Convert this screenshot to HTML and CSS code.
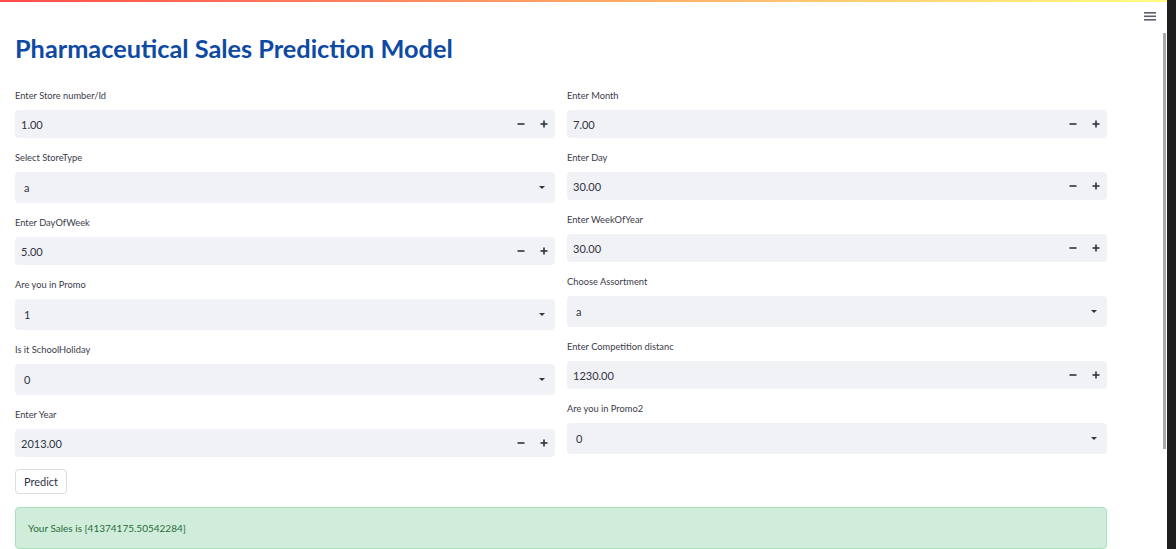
FILE: index.html
```html
<!DOCTYPE html>
<html>
<head>
<meta charset="utf-8">
<link rel="stylesheet" href="styles.css">
</head>
<body>
<div class="app">
  <div class="topline"></div>
  <button class="menu" aria-label="menu">
    <svg width="12" height="9" viewBox="0 0 12 9"><rect x="0" y="0" width="12" height="1.6" fill="#5c5f6a"/><rect x="0" y="3.5" width="12" height="1.6" fill="#5c5f6a"/><rect x="0" y="7" width="12" height="1.6" fill="#5c5f6a"/></svg>
  </button>
  <main class="main">
    <h1 class="title">Pharmaceutical Sales Prediction Model</h1>
    <div class="cols">
      <div class="col">
        <div class="widget">
          <label class="lbl">Enter Store number/Id</label>
          <div class="num"><span class="val">1.00</span><span class="step"><svg width="8" height="8" viewBox="0 0 8 8"><rect x="0.5" y="3.2" width="7" height="1.6" fill="#31333f"/></svg></span><span class="step"><svg width="8" height="8" viewBox="0 0 8 8"><rect x="0.5" y="3.2" width="7" height="1.6" fill="#31333f"/><rect x="3.2" y="0.5" width="1.6" height="7" fill="#31333f"/></svg></span></div>
        </div>
        <div class="widget">
          <label class="lbl">Select StoreType</label>
          <div class="sel"><span class="val">a</span><svg class="caret" width="6" height="3" viewBox="0 0 6 3"><path d="M0 0h6L3 3z" fill="#31333f"/></svg></div>
        </div>
        <div class="widget">
          <label class="lbl">Enter DayOfWeek</label>
          <div class="num"><span class="val">5.00</span><span class="step"><svg width="8" height="8" viewBox="0 0 8 8"><rect x="0.5" y="3.2" width="7" height="1.6" fill="#31333f"/></svg></span><span class="step"><svg width="8" height="8" viewBox="0 0 8 8"><rect x="0.5" y="3.2" width="7" height="1.6" fill="#31333f"/><rect x="3.2" y="0.5" width="1.6" height="7" fill="#31333f"/></svg></span></div>
        </div>
        <div class="widget">
          <label class="lbl">Are you in Promo</label>
          <div class="sel"><span class="val">1</span><svg class="caret" width="6" height="3" viewBox="0 0 6 3"><path d="M0 0h6L3 3z" fill="#31333f"/></svg></div>
        </div>
        <div class="widget">
          <label class="lbl">Is it SchoolHoliday</label>
          <div class="sel"><span class="val">0</span><svg class="caret" width="6" height="3" viewBox="0 0 6 3"><path d="M0 0h6L3 3z" fill="#31333f"/></svg></div>
        </div>
        <div class="widget">
          <label class="lbl">Enter Year</label>
          <div class="num"><span class="val">2013.00</span><span class="step"><svg width="8" height="8" viewBox="0 0 8 8"><rect x="0.5" y="3.2" width="7" height="1.6" fill="#31333f"/></svg></span><span class="step"><svg width="8" height="8" viewBox="0 0 8 8"><rect x="0.5" y="3.2" width="7" height="1.6" fill="#31333f"/><rect x="3.2" y="0.5" width="1.6" height="7" fill="#31333f"/></svg></span></div>
        </div>
      </div>
      <div class="col">
        <div class="widget">
          <label class="lbl">Enter Month</label>
          <div class="num"><span class="val">7.00</span><span class="step"><svg width="8" height="8" viewBox="0 0 8 8"><rect x="0.5" y="3.2" width="7" height="1.6" fill="#31333f"/></svg></span><span class="step"><svg width="8" height="8" viewBox="0 0 8 8"><rect x="0.5" y="3.2" width="7" height="1.6" fill="#31333f"/><rect x="3.2" y="0.5" width="1.6" height="7" fill="#31333f"/></svg></span></div>
        </div>
        <div class="widget">
          <label class="lbl">Enter Day</label>
          <div class="num"><span class="val">30.00</span><span class="step"><svg width="8" height="8" viewBox="0 0 8 8"><rect x="0.5" y="3.2" width="7" height="1.6" fill="#31333f"/></svg></span><span class="step"><svg width="8" height="8" viewBox="0 0 8 8"><rect x="0.5" y="3.2" width="7" height="1.6" fill="#31333f"/><rect x="3.2" y="0.5" width="1.6" height="7" fill="#31333f"/></svg></span></div>
        </div>
        <div class="widget">
          <label class="lbl">Enter WeekOfYear</label>
          <div class="num"><span class="val">30.00</span><span class="step"><svg width="8" height="8" viewBox="0 0 8 8"><rect x="0.5" y="3.2" width="7" height="1.6" fill="#31333f"/></svg></span><span class="step"><svg width="8" height="8" viewBox="0 0 8 8"><rect x="0.5" y="3.2" width="7" height="1.6" fill="#31333f"/><rect x="3.2" y="0.5" width="1.6" height="7" fill="#31333f"/></svg></span></div>
        </div>
        <div class="widget">
          <label class="lbl">Choose Assortment</label>
          <div class="sel"><span class="val">a</span><svg class="caret" width="6" height="3" viewBox="0 0 6 3"><path d="M0 0h6L3 3z" fill="#31333f"/></svg></div>
        </div>
        <div class="widget">
          <label class="lbl">Enter Competition distanc</label>
          <div class="num"><span class="val">1230.00</span><span class="step"><svg width="8" height="8" viewBox="0 0 8 8"><rect x="0.5" y="3.2" width="7" height="1.6" fill="#31333f"/></svg></span><span class="step"><svg width="8" height="8" viewBox="0 0 8 8"><rect x="0.5" y="3.2" width="7" height="1.6" fill="#31333f"/><rect x="3.2" y="0.5" width="1.6" height="7" fill="#31333f"/></svg></span></div>
        </div>
        <div class="widget">
          <label class="lbl">Are you in Promo2</label>
          <div class="sel"><span class="val">0</span><svg class="caret" width="6" height="3" viewBox="0 0 6 3"><path d="M0 0h6L3 3z" fill="#31333f"/></svg></div>
        </div>
      </div>
    </div>
    <button class="btn">Predict</button>
    <div class="success">Your Sales is [41374175.50542284]</div>
  </main>
  <div class="thumb"></div>
</div>
<div class="edge"></div>
</body>
</html>
```

FILE: styles.css
```css
* { box-sizing: border-box; }
html, body { margin: 0; padding: 0; height: 100%; overflow: hidden; }
body {
  display: flex;
  font-family: Lato, "Liberation Sans", sans-serif;
  color: #31333f;
  background: #fff;
}
.app {
  position: relative;
  width: 1167px;
  height: 549px;
  overflow: hidden;
  background: #fff;
}
.edge { width: 9px; background: #1f1f1f; }
.topline {
  height: 2px;
  background: linear-gradient(90deg, #ff4b4b, #fffd80);
}
.menu {
  position: absolute;
  top: 12px;
  left: 1144px;
  padding: 0;
  border: 0;
  background: none;
  line-height: 0;
}
.thumb {
  position: absolute;
  left: 1163px;
  top: 33px;
  width: 3px;
  height: 416px;
  background: #a9a9ab;
}
.main {
  width: 1107px;
  padding-left: 15px;
}
.title {
  margin: 31px 0 25px;
  font-size: 25.3px;
  line-height: 30px;
  font-weight: 700;
  color: #0e4aa3;
  letter-spacing: 0;
}
.cols {
  display: grid;
  grid-template-columns: 1fr 1fr;
  column-gap: 12px;
  align-items: start;
}
.col { display: flex; flex-direction: column; gap: 12px; }
.widget { display: flex; flex-direction: column; }
.lbl {
  font-size: 9.3px;
  line-height: 15px;
  margin-bottom: 7px;
  color: #3a3c48;
}
.num, .sel {
  display: flex;
  align-items: center;
  background: #f0f2f6;
  border-radius: 4px;
  font-size: 11px;
}
.num { height: 28px; padding-left: 6px; }
.sel { height: 31px; padding-left: 9px; padding-right: 10px; }
.val { flex: 1; }
.step {
  width: 23px;
  height: 28px;
  display: flex;
  align-items: center;
  justify-content: center;
}
.caret { display: block; }
.btn {
  display: block;
  margin-top: 12px;
  height: 25px;
  width: 52px;
  padding: 0;
  font-family: inherit;
  font-size: 11px;
  color: #31333f;
  background: #fff;
  border: 1px solid #dcdde2;
  border-radius: 4px;
}
.success {
  margin-top: 13px;
  height: 42px;
  padding-left: 12px;
  display: flex;
  align-items: center;
  font-size: 10px;
  color: #2b6b3c;
  background: #d0eddb;
  border: 1px solid #a9dfbb;
  border-radius: 4px;
}
```
